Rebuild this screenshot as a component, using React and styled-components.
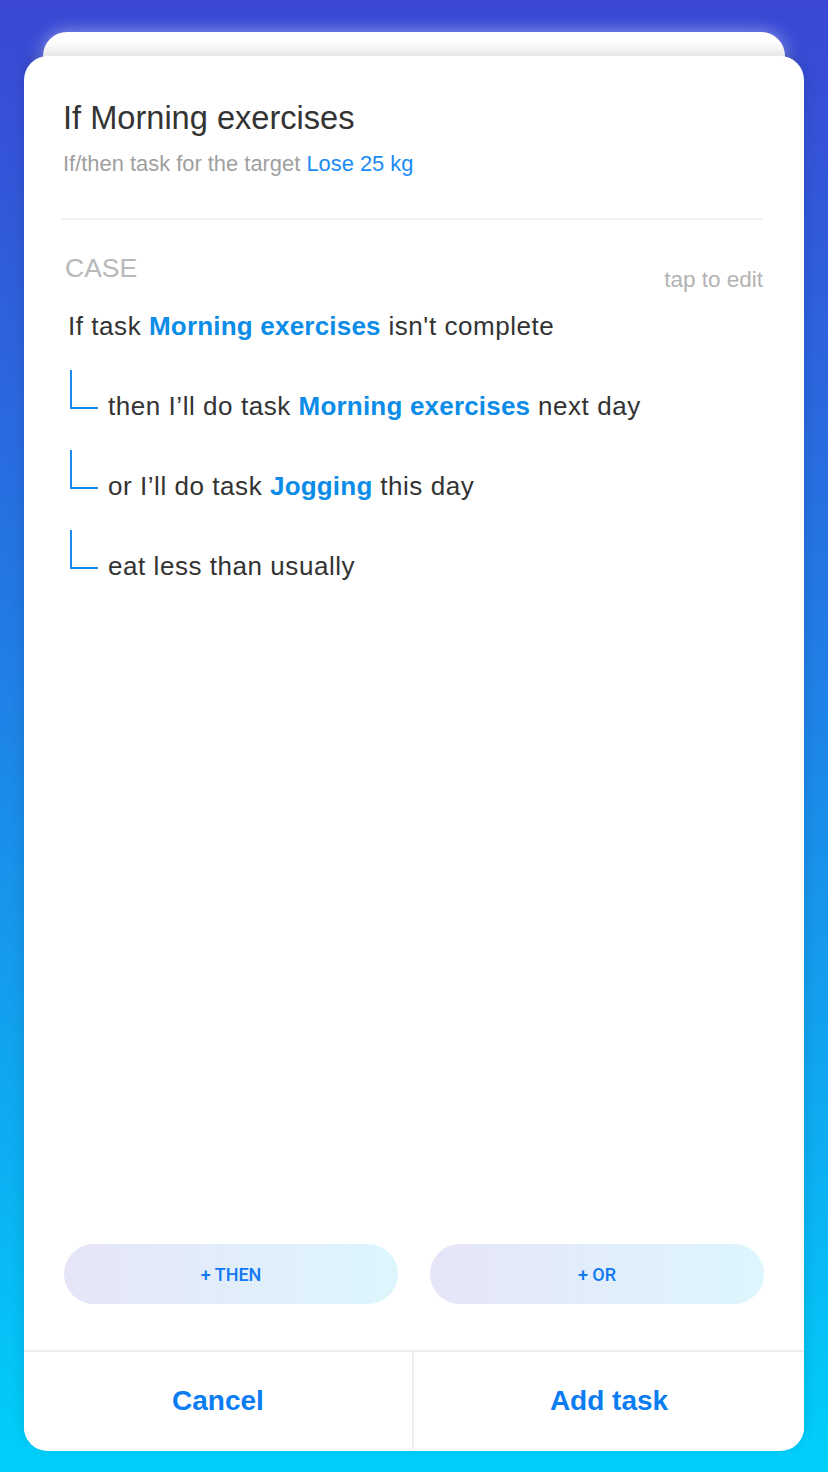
import React from "react";
import styled, { createGlobalStyle } from "styled-components";

const GlobalStyle = createGlobalStyle`
  html, body {
    margin: 0;
    padding: 0;
  }
  body {
    font-family: "Liberation Sans", Arial, sans-serif;
    -webkit-font-smoothing: antialiased;
  }
`;

const Page = styled.div`
  box-sizing: border-box;
  min-height: 1472px;
  padding: 32px 24px 21px;
  background: linear-gradient(180deg, #3a47d4 0%, #2377e4 40%, #0fa9f0 75%, #00d0fb 100%);
`;

const BackCard = styled.div`
  position: relative;
  height: 48px;
  margin: 0 19px -24px;
  border-radius: 24px 24px 0 0;
  background: #fff;
  box-shadow: 0 0 18px rgba(255, 255, 255, 0.45);
`;

const Card = styled.div`
  position: relative;
  z-index: 1;
  height: 1395px;
  display: flex;
  flex-direction: column;
  background: #fff;
  border-radius: 24px;
  box-shadow: 0 -5px 14px rgba(0, 0, 0, 0.12);
  overflow: hidden;
`;

const Content = styled.div`
  flex: 1;
  display: flex;
  flex-direction: column;
`;

const Header = styled.div`
  padding: 42px 42px 0 38px;
`;

const Title = styled.h1`
  margin: 0 0 0 1px;
  font-size: 32.6px;
  line-height: 40px;
  font-weight: 400;
  color: #333;
`;

const Subtitle = styled.p`
  margin: 12px 0 0 1px;
  font-size: 21.9px;
  line-height: 28px;
  color: #a0a0a0;
`;

const TargetLink = styled.span`
  color: #1a8cf5;
`;

const Divider = styled.div`
  margin-top: 40px;
  height: 2px;
  background: #efefef;
`;

const CaseRow = styled.div`
  display: flex;
  justify-content: space-between;
  align-items: flex-start;
  padding: 33px 41px 0 41px;
`;

const CaseLabel = styled.span`
  font-size: 26.5px;
  line-height: 30px;
  color: #b8b8b8;
`;

const EditHint = styled.span`
  margin-top: 15px;
  font-size: 22.5px;
  line-height: 24px;
  color: #b3b3b3;
`;

const Tree = styled.div`
  display: flex;
  flex-direction: column;
  gap: 28px;
  padding: 18px 0 0 44px;
`;

const Line = styled.div`
  font-size: 26px;
  letter-spacing: 0.55px;
  line-height: 32px;
  color: #333;
  white-space: nowrap;
`;

const Task = styled.b`
  color: #0a8ce8;
  font-weight: 700;
  letter-spacing: 0.2px;
`;

const Branch = styled.div`
  display: flex;
  align-items: flex-start;
  padding-left: 2px;
`;

const Connector = styled.div`
  flex: none;
  width: 26px;
  height: 37px;
  border-left: 2px solid #1a8cf0;
  border-bottom: 2px solid #1a8cf0;
  margin-right: 10px;
`;

const BranchText = styled(Line)`
  margin-top: 20px;
`;

const Actions = styled.div`
  display: grid;
  grid-template-columns: 1fr 1fr;
  gap: 32px;
  padding: 0 40px 46px;
`;

const Pill = styled.button`
  height: 60px;
  border: none;
  border-radius: 30px;
  background: linear-gradient(90deg, #e6e5f8 0%, #ddf6fd 100%);
  color: #0f78f2;
  font-family: Roboto, "Liberation Sans", sans-serif;
  font-weight: 500;
  font-size: 18px;
  cursor: pointer;
`;

const Footer = styled.div`
  display: grid;
  grid-template-columns: 1fr 1fr;
  height: 101px;
  border-top: 2px solid #eeeeee;
  box-sizing: border-box;
`;

const FooterButton = styled.button`
  border: none;
  border-right: ${p => (p.$divider ? "2px solid #eeeeee" : "none")};
  margin-bottom: 2px;
  background: #fff;
  color: #0b7cf2;
  font-family: inherit;
  font-size: 28px;
  font-weight: 700;
  cursor: pointer;
`;

const branches = [
  { pre: "then I’ll do task ", task: "Morning exercises", post: " next day" },
  { pre: "or I’ll do task ", task: "Jogging", post: " this day" },
  { pre: "eat less than usually" },
];

export default function App() {
  return (
    <Page>
      <GlobalStyle />
      <BackCard />
      <Card>
        <Content>
          <Header>
            <Title>If Morning exercises</Title>
            <Subtitle>
              If/then task for the target <TargetLink>Lose 25 kg</TargetLink>
            </Subtitle>
            <Divider />
          </Header>
          <CaseRow>
            <CaseLabel>CASE</CaseLabel>
            <EditHint>tap to edit</EditHint>
          </CaseRow>
          <Tree>
            <Line>
              If task <Task>Morning exercises</Task> isn't complete
            </Line>
            {branches.map((b, i) => (
              <Branch key={i}>
                <Connector />
                <BranchText>
                  {b.pre}
                  {b.task && <Task>{b.task}</Task>}
                  {b.post}
                </BranchText>
              </Branch>
            ))}
          </Tree>
        </Content>
        <Actions>
          <Pill>+ THEN</Pill>
          <Pill>+ OR</Pill>
        </Actions>
        <Footer>
          <FooterButton $divider>Cancel</FooterButton>
          <FooterButton>Add task</FooterButton>
        </Footer>
      </Card>
    </Page>
  );
}
